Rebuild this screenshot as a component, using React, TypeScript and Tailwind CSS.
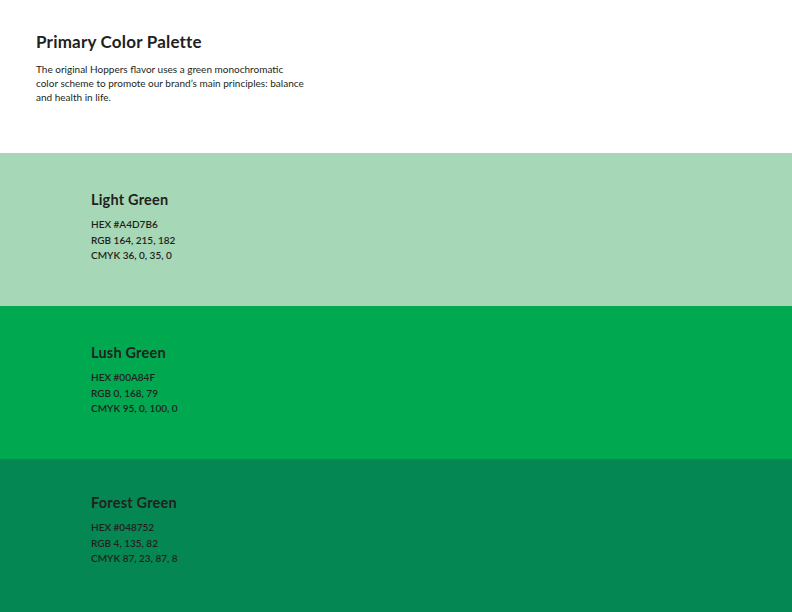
export default function App() {
  const swatches = [
    { name: "Light Green", bg: "bg-[#a6d7b6]", hex: "#A4D7B6", rgb: "164, 215, 182", cmyk: "36, 0, 35, 0", pt: "pt-[38px]" },
    { name: "Lush Green", bg: "bg-[#00a84f]", hex: "#00A84F", rgb: "0, 168, 79", cmyk: "95, 0, 100, 0", pt: "pt-[38px]" },
    { name: "Forest Green", bg: "bg-[#048752]", hex: "#048752", rgb: "4, 135, 82", cmyk: "87, 23, 87, 8", pt: "pt-[35px]" },
  ];
  return (
    <div className="w-[792px] h-[612px] flex flex-col bg-white text-[#231f20]" style={{ fontFamily: "'Lato', 'Noto Sans', sans-serif" }}>
      <div className="h-[153px] pl-[36px] pt-[32px]">
        <h1 className="text-[17px] font-bold leading-[20px] tracking-[0.2px]">Primary Color Palette</h1>
        <p className="mt-[10px] text-[10px] leading-[14px] w-[270px]">
          The original Hoppers flavor uses a green monochromatic color scheme to promote our brand’s main principles: balance and health in life.
        </p>
      </div>
      {swatches.map((s) => (
        <div key={s.name} className={`h-[153px] pl-[91px] ${s.bg} ${s.pt}`}>
          <div className="text-[14.5px] font-bold leading-[18px] tracking-[0.2px]">{s.name}</div>
          <div className="mt-[8px] text-[10px] font-semibold leading-[15.5px]">
            <div>HEX {s.hex}</div>
            <div>RGB {s.rgb}</div>
            <div>CMYK {s.cmyk}</div>
          </div>
        </div>
      ))}
    </div>
  );
}
